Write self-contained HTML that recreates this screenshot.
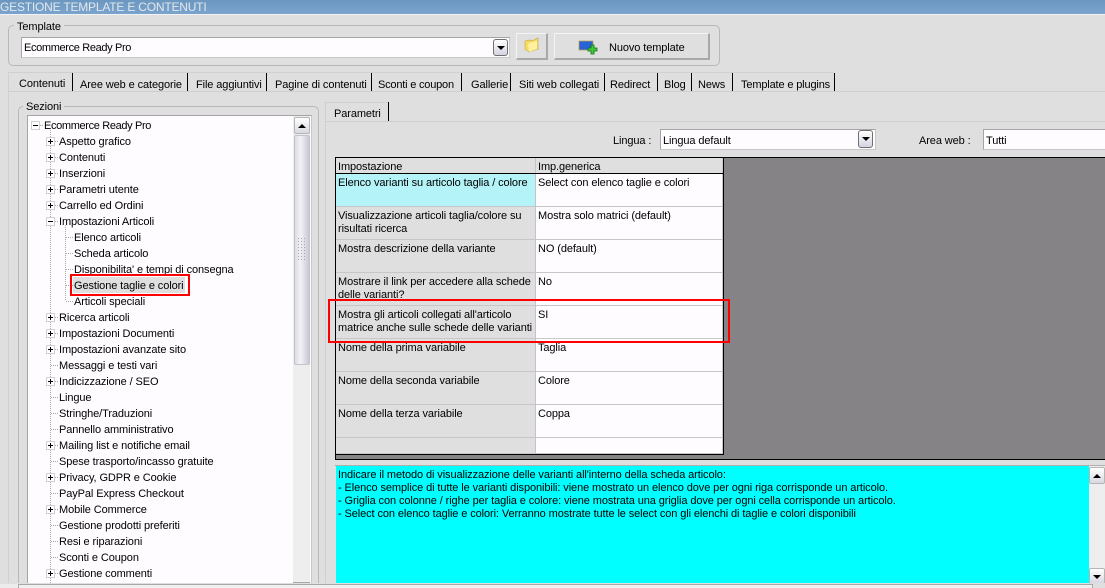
<!DOCTYPE html>
<html><head><meta charset="utf-8"><style>
html,body{margin:0;padding:0;width:1105px;height:588px;overflow:hidden}
body{position:relative;background:#dfdfdf;font:11px/13px "Liberation Sans",sans-serif;color:#000}
div{position:absolute;box-sizing:border-box}
.t{white-space:nowrap;height:13px;position:absolute;margin-top:1px;letter-spacing:-.1px}
.inp{background:#fffcff;border:1px solid #a5a5a5;border-right-color:#c8c8c8;border-bottom-color:#c8c8c8}
.btn{background:#dfdfdf;border:1px solid #f4f4f4;border-right:2px solid #a8a8a8;border-bottom:2px solid #a8a8a8}
.dd{width:15px;height:17px;background:linear-gradient(#fff,#d4d4e2);border:1px solid #707070;border-radius:3px}
.dd:after{content:"";position:absolute;left:3px;top:6px;border:4px solid transparent;border-top:4px solid #000;border-bottom:0}
.sep{width:1px;background:#000;height:18px;top:73px}
.hl{height:1px;background:#c8c6c9;left:336px;width:387px}
.x{width:9px;height:9px;left:46px;background:#fff;border:1px solid #d0d0d0}
.x:before{content:"";position:absolute;left:1px;top:3px;width:5px;height:1px;background:#000}
.p:after{content:"";position:absolute;left:3px;top:1px;width:1px;height:5px;background:#000}
.sb{background:linear-gradient(#fff,#d8d8e2);border:1px solid #b5b5b5;border-radius:2px}
.up:after{content:"";position:absolute;left:3px;top:6px;border:4px solid transparent;border-bottom:4px solid #000;border-top:0}
.dn:after{content:"";position:absolute;left:3px;top:6px;border:4px solid transparent;border-top:4px solid #000;border-bottom:0}
.grp{border:1px solid #b8b8b8;border-radius:5px}
.lb{background:#dfdfdf;padding:0 3px}
</style></head><body>

<div style="left:0;top:0;width:1105px;height:14px;background:linear-gradient(#6a96bf,#7ba4cd)"></div>
<div style="left:0;top:14px;width:1105px;height:1px;background:#f2f2f2"></div>
<span class="t" style="left:0;top:0;color:#e4e8ec;font-size:12px;letter-spacing:-.2px">GESTIONE TEMPLATE E CONTENUTI</span>

<div class="grp" style="left:8px;top:25px;width:712px;height:41px"></div>
<span class="t lb" style="left:14px;top:20px">Template</span>
<div class="inp" style="left:21px;top:37px;width:489px;height:21px"></div>
<span class="t" style="left:24px;top:41px;margin-top:1px;letter-spacing:-.35px">Ecommerce Ready Pro</span>
<div class="dd" style="left:493px;top:39px"></div>
<div class="btn" style="left:516px;top:33px;width:32px;height:27px"></div>
<svg style="position:absolute;left:522px;top:36px" width="20" height="18"><path d="M3 5l5-1 2 1 6-3v11l-9 3-4-3z" fill="#f8dc60" stroke="#c8b050" stroke-width=".7"/><path d="M6 8l4-2 5-1v8l-8 3z" fill="#fff0a0"/></svg>
<div class="btn" style="left:554px;top:33px;width:156px;height:27px"></div>
<svg style="position:absolute;left:578px;top:39px" width="22" height="16"><rect x="1" y="2" width="14" height="9" fill="#2a62d8" stroke="#c0a040" stroke-width=".7"/><path d="M13 6h3v3h3v3h-3v3h-3v-3h-3V9h3z" fill="#42c83c" stroke="#107010" stroke-width=".8"/></svg>
<span class="t" style="left:609px;top:41px">Nuovo template</span>

<!-- main tabs -->
<div style="left:8px;top:72px;width:826px;height:1px;background:#d0d0d0"></div>
<div style="left:8px;top:72px;width:1px;height:516px;background:#d0d0d0"></div>
<div style="left:8px;top:91px;width:1097px;height:1px;background:#cfcfcf"></div>
<span class="t" style="left:19px;top:77px">Contenuti</span><div class="sep" style="left:72px"></div>
<span class="t" style="left:80px;top:78px">Aree web e categorie</span><div class="sep" style="left:187px"></div>
<span class="t" style="left:196px;top:78px">File aggiuntivi</span><div class="sep" style="left:266px"></div>
<span class="t" style="left:275px;top:78px">Pagine di contenuti</span><div class="sep" style="left:371px"></div>
<span class="t" style="left:378px;top:78px;letter-spacing:-.2px">Sconti e coupon</span><div class="sep" style="left:461px"></div>
<span class="t" style="left:471px;top:78px">Gallerie</span><div class="sep" style="left:510px"></div>
<span class="t" style="left:519px;top:78px">Siti web collegati</span><div class="sep" style="left:604px"></div>
<span class="t" style="left:610px;top:78px">Redirect</span><div class="sep" style="left:657px"></div>
<span class="t" style="left:664px;top:78px">Blog</span><div class="sep" style="left:691px"></div>
<span class="t" style="left:698px;top:78px">News</span><div class="sep" style="left:732px"></div>
<span class="t" style="left:741px;top:78px;letter-spacing:-.15px">Template e plugins</span><div class="sep" style="left:834px"></div>

<!-- Sezioni -->
<div class="grp" style="left:18px;top:106px;width:301px;height:482px"></div>
<span class="t lb" style="left:23px;top:100px">Sezioni</span>
<div class="inp" style="left:27px;top:115px;width:285px;height:473px"></div>
<div style="left:293px;top:116px;width:17px;height:466px;background:#eeeeee"></div>
<div class="sb up" style="left:294px;top:117px;width:16px;height:17px"></div>
<div class="sb" style="left:294px;top:135px;width:16px;height:230px;background:linear-gradient(90deg,#dcdce6,#f2f2f6 40%,#c8c8d4);border-color:#c4c4cc"></div>
<svg style="position:absolute;left:298px;top:238px" width="8" height="23"><path d="M.5 0V23M3.500 0V23M6.500 0V23" stroke="#a8a8b0" stroke-dasharray="1 2"/></svg>
<div style="left:293px;top:582px;width:17px;height:1px;background:#a8a8a8"></div>

<svg style="position:absolute;left:30px;top:116px" width="170" height="467">
<g stroke="#a8a8a8" stroke-dasharray="1 1" fill="none">
<path d="M20.500 14V467"/><path d="M35.500 109V185"/>
<path d="M10 9.500H13M25 25.500H28M25 41.500H28M25 57.500H28M25 73.500H28M25 89.500H28M25 105.500H28M36 121.500H43M36 137.500H43M36 153.500H43M36 169.500H43M36 185.500H43M25 201.500H28M25 217.500H28M25 233.500H28M21 249.500H28M25 265.500H28M21 281.500H28M21 297.500H28M21 313.500H28M25 329.500H28M21 345.500H28M25 361.500H28M21 377.500H28M25 393.500H28M21 409.500H28M21 425.500H28M21 441.500H28M25 457.500H28"/>
</g></svg>

<div class="x" style="left:31px;top:121px"></div><span class="t" style="left:44px;top:119px;letter-spacing:-.35px">Ecommerce Ready Pro</span>
<div class="x p" style="top:137px"></div><span class="t" style="left:59px;top:135px">Aspetto grafico</span>
<div class="x p" style="top:153px"></div><span class="t" style="left:59px;top:151px">Contenuti</span>
<div class="x p" style="top:169px"></div><span class="t" style="left:59px;top:167px">Inserzioni</span>
<div class="x p" style="top:185px"></div><span class="t" style="left:59px;top:183px">Parametri utente</span>
<div class="x p" style="top:201px"></div><span class="t" style="left:59px;top:199px">Carrello ed Ordini</span>
<div class="x" style="top:217px"></div><span class="t" style="left:59px;top:215px">Impostazioni Articoli</span>
<span class="t" style="left:74px;top:231px">Elenco articoli</span>
<span class="t" style="left:74px;top:247px">Scheda articolo</span>
<span class="t" style="left:74px;top:263px">Disponibilita' e tempi di consegna</span>
<div style="left:73px;top:277px;width:112px;height:16px;background:#dfdfdf"></div>
<span class="t" style="left:74px;top:279px">Gestione taglie e colori</span>
<span class="t" style="left:74px;top:295px">Articoli speciali</span>
<div class="x p" style="top:313px"></div><span class="t" style="left:59px;top:311px">Ricerca articoli</span>
<div class="x p" style="top:329px"></div><span class="t" style="left:59px;top:327px">Impostazioni Documenti</span>
<div class="x p" style="top:345px"></div><span class="t" style="left:59px;top:343px">Impostazioni avanzate sito</span>
<span class="t" style="left:59px;top:359px">Messaggi e testi vari</span>
<div class="x p" style="top:377px"></div><span class="t" style="left:59px;top:375px">Indicizzazione / SEO</span>
<span class="t" style="left:59px;top:391px">Lingue</span>
<span class="t" style="left:59px;top:407px">Stringhe/Traduzioni</span>
<span class="t" style="left:59px;top:423px">Pannello amministrativo</span>
<div class="x p" style="top:441px"></div><span class="t" style="left:59px;top:439px">Mailing list e notifiche email</span>
<span class="t" style="left:59px;top:455px">Spese trasporto/incasso gratuite</span>
<div class="x p" style="top:473px"></div><span class="t" style="left:59px;top:471px">Privacy, GDPR e Cookie</span>
<span class="t" style="left:59px;top:487px">PayPal Express Checkout</span>
<div class="x p" style="top:505px"></div><span class="t" style="left:59px;top:503px">Mobile Commerce</span>
<span class="t" style="left:59px;top:519px">Gestione prodotti preferiti</span>
<span class="t" style="left:59px;top:535px">Resi e riparazioni</span>
<span class="t" style="left:59px;top:551px">Sconti e Coupon</span>
<div class="x p" style="top:569px"></div><span class="t" style="left:59px;top:567px">Gestione commenti</span>

<div style="left:70px;top:274px;width:120px;height:22px;border:2px solid #f00"></div>

<!-- right panel -->
<div style="left:325px;top:102px;width:1px;height:486px;background:#d0d0d0"></div>
<div style="left:325px;top:102px;width:64px;height:1px;background:#d0d0d0"></div>
<span class="t" style="left:334px;top:107px">Parametri</span><div class="sep" style="left:388px;top:102px;height:19px"></div>
<div style="left:326px;top:121px;width:779px;height:1px;background:#cfcfcf"></div>

<span class="t" style="left:613px;top:134px">Lingua :</span>
<div class="inp" style="left:660px;top:129px;width:216px;height:21px"></div>
<span class="t" style="left:663px;top:134px">Lingua default</span>
<div class="dd" style="left:858px;top:130px;height:18px"></div>
<span class="t" style="left:919px;top:134px">Area web :</span>
<div class="inp" style="left:983px;top:129px;width:125px;height:21px"></div>
<span class="t" style="left:986px;top:134px">Tutti</span>

<!-- grid -->
<div style="left:335px;top:157px;width:780px;height:303px;background:#858385;border:1px solid #000;border-right:0"></div>
<div style="left:336px;top:158px;width:388px;height:296px;background:#fffcff;border-right:1px solid #000"></div>
<div style="left:336px;top:158px;width:199px;height:295px;background:#dfdfdf"></div>
<div style="left:336px;top:174px;width:199px;height:32px;background:#b4f4f8"></div>
<div style="left:535px;top:158px;width:188px;height:15px;background:#dfdfdf"></div>
<div style="left:535px;top:158px;width:1px;height:295px;background:#c4c4c8"></div>
<div style="left:722px;top:158px;width:1px;height:295px;background:#c8c6c9"></div>
<div style="left:336px;top:173px;width:387px;height:1px;background:#000"></div>
<div style="left:336px;top:454px;width:388px;height:1px;background:#000"></div>
<div class="hl" style="top:206px"></div><div class="hl" style="top:239px"></div><div class="hl" style="top:272px"></div><div class="hl" style="top:305px"></div><div class="hl" style="top:338px"></div><div class="hl" style="top:371px"></div><div class="hl" style="top:404px"></div><div class="hl" style="top:437px"></div><div class="hl" style="top:453px"></div>

<span class="t" style="left:338px;top:160px">Impostazione</span>
<span class="t" style="left:538px;top:160px">Imp.generica</span>
<span class="t" style="left:338px;top:176px">Elenco varianti su articolo taglia / colore</span>
<span class="t" style="left:538px;top:176px">Select con elenco taglie e colori</span>
<span class="t" style="left:338px;top:209px">Visualizzazione articoli taglia/colore su</span>
<span class="t" style="left:338px;top:222px">risultati ricerca</span>
<span class="t" style="left:538px;top:209px">Mostra solo matrici (default)</span>
<span class="t" style="left:338px;top:242px">Mostra descrizione della variante</span>
<span class="t" style="left:538px;top:242px">NO (default)</span>
<span class="t" style="left:338px;top:275px">Mostrare il link per accedere alla schede</span>
<span class="t" style="left:338px;top:288px">delle varianti?</span>
<span class="t" style="left:538px;top:275px">No</span>
<span class="t" style="left:338px;top:308px">Mostra gli articoli collegati all'articolo</span>
<span class="t" style="left:338px;top:321px">matrice anche sulle schede delle varianti</span>
<span class="t" style="left:538px;top:308px">SI</span>
<span class="t" style="left:338px;top:341px">Nome della prima variabile</span>
<span class="t" style="left:538px;top:341px">Taglia</span>
<span class="t" style="left:338px;top:374px">Nome della seconda variabile</span>
<span class="t" style="left:538px;top:374px">Colore</span>
<span class="t" style="left:338px;top:407px">Nome della terza variabile</span>
<span class="t" style="left:538px;top:407px">Coppa</span>

<div style="left:328px;top:299px;width:402px;height:44px;border:2px solid #f00"></div>

<!-- description -->
<div style="left:335px;top:465px;width:770px;height:1px;background:#b0b0b0"></div>
<div style="left:336px;top:466px;width:753px;height:118px;background:#00ffff"></div>
<div style="left:1089px;top:466px;width:16px;height:118px;background:#eee"></div>
<div class="sb up" style="left:1089px;top:467px;width:16px;height:17px"></div>
<div class="sb dn" style="left:1089px;top:568px;width:16px;height:16px"></div>
<span class="t" style="left:338px;top:468px">Indicare il metodo di visualizzazione delle varianti all'interno della scheda articolo:</span>
<span class="t" style="left:338px;top:481px">- Elenco semplice di tutte le varianti disponibili: viene mostrato un elenco dove per ogni riga corrisponde un articolo.</span>
<span class="t" style="left:338px;top:494px">- Griglia con colonne / righe per taglia e colore: viene mostrata una griglia dove per ogni cella corrisponde un articolo.</span>
<span class="t" style="left:338px;top:507px">- Select con elenco taglie e colori: Verranno mostrate tutte le select con gli elenchi di taglie e colori disponibili</span>

<!-- bottom bar -->
<div style="left:0;top:583px;width:1105px;height:5px;background:#dfdfdf"></div>
<div style="left:0;top:584px;width:18px;height:4px;background:#ececec"></div>
<div style="left:18px;top:584px;width:1075px;height:4px;background:#f0f0f0;border-top:1px solid #a8a8a8;border-left:1px solid #a8a8a8;border-right:1px solid #a8a8a8"></div>
</body></html>
